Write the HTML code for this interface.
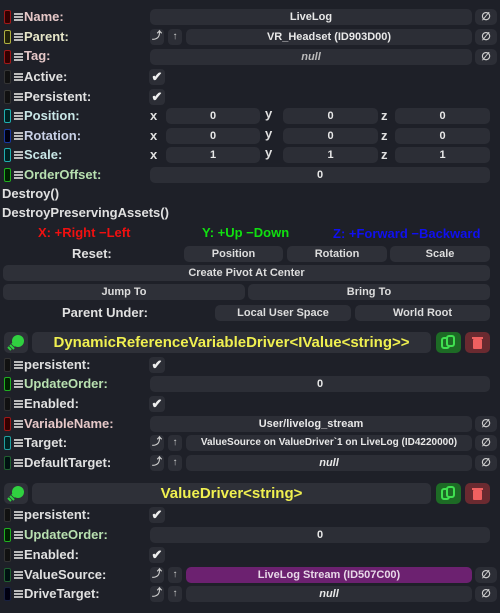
<!DOCTYPE html><html><head><style>
body{margin:0;width:500px;height:613px;background:#1e2028;overflow:hidden;font-family:"Liberation Sans",sans-serif;font-weight:bold;color:#e0e0e0;position:relative}
div{position:absolute;box-sizing:border-box}
.f{background:#2c2e36;border-radius:5px;height:16px;font-size:11px;text-align:center;line-height:16px;color:#e8e8e8}
.lb{font-size:13px;line-height:16px}
.ic{width:7px;height:14px;border:1.5px solid;border-radius:2px;background:#111}
.hb{width:9px;height:8px;border-top:2px solid #bbb;border-bottom:2px solid #bbb;margin-top:4px}
.hb:after{content:"";position:absolute;left:0;top:1px;width:9px;height:2px;background:#bbb}
.n{width:22px;height:16px;background:#2c2e36;border-radius:5px;font-size:11px;line-height:16px;text-align:center;color:#ccc}
.b{width:14px;height:16px;background:#2c2e36;border-radius:4px;font-size:10px;line-height:16px;text-align:center;color:#ccc}
.ck{width:16px;height:16px;background:#2c2e36;border-radius:4px;color:#eee;font-size:13px;line-height:16px;text-align:center}
.bt{background:#2e3038;border-radius:5px;height:16px;font-size:11px;line-height:16px;text-align:center;color:#ddd}
.ax{font-size:13px;line-height:16px}
</style></head><body>

<div class="ic" style="left:4px;top:10px;border-color:#a01818;background:#300"></div><div class="hb" style="left:14px;top:9px"></div><div class="lb" style="left:24px;top:9px;color:#e6c8c8">Name:</div>
<div class="f" style="left:150px;top:9px;width:322px">LiveLog</div><div class="n" style="left:475px;top:9px">∅</div>

<div class="ic" style="left:4px;top:30px;border-color:#b0b040;background:#222208"></div><div class="hb" style="left:14px;top:29px"></div><div class="lb" style="left:24px;top:29px;color:#e6e6c8">Parent:</div>
<div class="b" style="left:150px;top:29px">⤴</div><div class="b" style="left:168px;top:29px">↑</div><div class="f" style="left:186px;top:29px;width:286px">VR_Headset (ID903D00)</div><div class="n" style="left:475px;top:29px">∅</div>

<div class="ic" style="left:4px;top:50px;border-color:#a01818;background:#300"></div><div class="hb" style="left:14px;top:49px"></div><div class="lb" style="left:24px;top:48px;color:#e6c8c8">Tag:</div>
<div class="f" style="left:150px;top:49px;width:322px;font-style:italic;color:#bbb">null</div><div class="n" style="left:475px;top:49px">∅</div>

<div class="ic" style="left:4px;top:70px;border-color:#333"></div><div class="hb" style="left:14px;top:69px"></div><div class="lb" style="left:24px;top:69px">Active:</div><div class="ck" style="left:149px;top:69px">✔</div>
<div class="ic" style="left:4px;top:90px;border-color:#333"></div><div class="hb" style="left:14px;top:89px"></div><div class="lb" style="left:24px;top:89px">Persistent:</div><div class="ck" style="left:149px;top:89px">✔</div>

<div class="ic" style="left:4px;top:109px;border-color:#20b0b0;background:#022"></div><div class="hb" style="left:14px;top:108px"></div><div class="lb" style="left:24px;top:108px;color:#c8e6e6">Position:</div>
<div class="ax" style="left:150px;top:108px">x</div><div class="f" style="left:166px;top:108px;width:94px">0</div><div class="ax" style="left:265px;top:106px">y</div><div class="f" style="left:283px;top:108px;width:95px">0</div><div class="ax" style="left:381px;top:108px">z</div><div class="f" style="left:395px;top:108px;width:95px">0</div>

<div class="ic" style="left:4px;top:129px;border-color:#1838a0;background:#001"></div><div class="hb" style="left:14px;top:128px"></div><div class="lb" style="left:24px;top:128px;color:#c8d0e6">Rotation:</div>
<div class="ax" style="left:150px;top:128px">x</div><div class="f" style="left:166px;top:128px;width:94px">0</div><div class="ax" style="left:265px;top:126px">y</div><div class="f" style="left:283px;top:128px;width:95px">0</div><div class="ax" style="left:381px;top:128px">z</div><div class="f" style="left:395px;top:128px;width:95px">0</div>

<div class="ic" style="left:4px;top:148px;border-color:#20b0b0;background:#022"></div><div class="hb" style="left:14px;top:147px"></div><div class="lb" style="left:24px;top:147px;color:#c8e6e6">Scale:</div>
<div class="ax" style="left:150px;top:147px">x</div><div class="f" style="left:166px;top:147px;width:94px">1</div><div class="ax" style="left:265px;top:145px">y</div><div class="f" style="left:283px;top:147px;width:95px">1</div><div class="ax" style="left:381px;top:147px">z</div><div class="f" style="left:395px;top:147px;width:95px">1</div>

<div class="ic" style="left:4px;top:168px;border-color:#20b020;background:#020"></div><div class="hb" style="left:14px;top:167px"></div><div class="lb" style="left:24px;top:167px;color:#b8e0b0">OrderOffset:</div>
<div class="f" style="left:150px;top:167px;width:340px">0</div>

<div class="lb" style="left:2px;top:186px">Destroy()</div>
<div class="lb" style="left:2px;top:205px">DestroyPreservingAssets()</div>
<div class="lb" style="left:38px;top:225px;color:#f01010">X: +Right −Left</div>
<div class="lb" style="left:202px;top:225px;color:#10e010">Y: +Up −Down</div>
<div class="lb" style="left:333px;top:226px;color:#1010f0">Z: +Forward −Backward</div>

<div class="lb" style="left:72px;top:246px">Reset:</div>
<div class="bt" style="left:184px;top:246px;width:99px">Position</div><div class="bt" style="left:287px;top:246px;width:100px">Rotation</div><div class="bt" style="left:390px;top:246px;width:100px">Scale</div>
<div class="bt" style="left:3px;top:265px;width:487px">Create Pivot At Center</div>
<div class="bt" style="left:3px;top:284px;width:242px">Jump To</div><div class="bt" style="left:248px;top:284px;width:242px">Bring To</div>
<div class="lb" style="left:62px;top:305px">Parent Under:</div>
<div class="bt" style="left:215px;top:305px;width:136px">Local User Space</div><div class="bt" style="left:355px;top:305px;width:135px">World Root</div>

<div style="left:4px;top:332px;width:24px;height:21px;background:#2e3038;border-radius:5px"><svg width="24" height="21"><circle cx="14" cy="9" r="6" fill="#30d040"/><path d="M6 13l4 4M4 15l3 3M8 11l3 3" stroke="#30d040" stroke-width="2"/></svg></div>
<div style="left:32px;top:332px;width:399px;height:21px;background:#2e3038;border-radius:5px;color:#f0f050;font-size:15px;line-height:21px;text-align:center">DynamicReferenceVariableDriver&lt;IValue&lt;string&gt;&gt;</div>
<div style="left:436px;top:332px;width:25px;height:21px;background:#1d6a25;border-radius:5px"><svg width="25" height="21"><rect x="6" y="6" width="7" height="10" rx="2" fill="none" stroke="#40e050" stroke-width="2"/><rect x="11" y="4" width="7" height="10" rx="2" fill="#1d6a25" stroke="#40e050" stroke-width="2"/></svg></div>
<div style="left:465px;top:332px;width:25px;height:21px;background:#6a2a30;border-radius:5px"><svg width="25" height="21"><rect x="8" y="7" width="9" height="10" rx="1" fill="#f06060"/><rect x="7" y="5" width="11" height="2" fill="#f06060"/></svg></div>

<div class="ic" style="left:4px;top:358px;border-color:#333"></div><div class="hb" style="left:14px;top:357px"></div><div class="lb" style="left:24px;top:357px">persistent:</div><div class="ck" style="left:149px;top:357px">✔</div>
<div class="ic" style="left:4px;top:377px;border-color:#20b020;background:#020"></div><div class="hb" style="left:14px;top:376px"></div><div class="lb" style="left:24px;top:376px;color:#b8e0b0">UpdateOrder:</div><div class="f" style="left:150px;top:376px;width:340px">0</div>
<div class="ic" style="left:4px;top:397px;border-color:#333"></div><div class="hb" style="left:14px;top:396px"></div><div class="lb" style="left:24px;top:396px">Enabled:</div><div class="ck" style="left:149px;top:396px">✔</div>
<div class="ic" style="left:4px;top:417px;border-color:#a01818;background:#300"></div><div class="hb" style="left:14px;top:416px"></div><div class="lb" style="left:24px;top:416px;color:#e6c8c8">VariableName:</div><div class="f" style="left:150px;top:416px;width:322px">User/livelog_stream</div><div class="n" style="left:475px;top:416px">∅</div>
<div class="ic" style="left:4px;top:436px;border-color:#20a0a0;background:#022"></div><div class="hb" style="left:14px;top:435px"></div><div class="lb" style="left:24px;top:435px">Target:</div><div class="b" style="left:150px;top:435px">⤴</div><div class="b" style="left:168px;top:435px">↑</div><div class="f" style="left:186px;top:435px;width:286px;font-size:10px">ValueSource on ValueDriver`1 on LiveLog (ID4220000)</div><div class="n" style="left:475px;top:435px">∅</div>
<div class="ic" style="left:4px;top:456px;border-color:#206030;background:#011"></div><div class="hb" style="left:14px;top:455px"></div><div class="lb" style="left:24px;top:455px">DefaultTarget:</div><div class="b" style="left:150px;top:455px">⤴</div><div class="b" style="left:168px;top:455px">↑</div><div class="f" style="left:186px;top:455px;width:286px;font-style:italic">null</div><div class="n" style="left:475px;top:455px">∅</div>

<div style="left:4px;top:483px;width:24px;height:21px;background:#2e3038;border-radius:5px"><svg width="24" height="21"><circle cx="14" cy="9" r="6" fill="#30d040"/><path d="M6 13l4 4M4 15l3 3M8 11l3 3" stroke="#30d040" stroke-width="2"/></svg></div>
<div style="left:32px;top:483px;width:399px;height:21px;background:#2e3038;border-radius:5px;color:#f0f050;font-size:15px;line-height:21px;text-align:center">ValueDriver&lt;string&gt;</div>
<div style="left:436px;top:483px;width:25px;height:21px;background:#1d6a25;border-radius:5px"><svg width="25" height="21"><rect x="6" y="6" width="7" height="10" rx="2" fill="none" stroke="#40e050" stroke-width="2"/><rect x="11" y="4" width="7" height="10" rx="2" fill="#1d6a25" stroke="#40e050" stroke-width="2"/></svg></div>
<div style="left:465px;top:483px;width:25px;height:21px;background:#6a2a30;border-radius:5px"><svg width="25" height="21"><rect x="8" y="7" width="9" height="10" rx="1" fill="#f06060"/><rect x="7" y="5" width="11" height="2" fill="#f06060"/></svg></div>

<div class="ic" style="left:4px;top:508px;border-color:#333"></div><div class="hb" style="left:14px;top:507px"></div><div class="lb" style="left:24px;top:507px">persistent:</div><div class="ck" style="left:149px;top:507px">✔</div>
<div class="ic" style="left:4px;top:528px;border-color:#20b020;background:#020"></div><div class="hb" style="left:14px;top:527px"></div><div class="lb" style="left:24px;top:527px;color:#b8e0b0">UpdateOrder:</div><div class="f" style="left:150px;top:527px;width:340px">0</div>
<div class="ic" style="left:4px;top:548px;border-color:#333"></div><div class="hb" style="left:14px;top:547px"></div><div class="lb" style="left:24px;top:547px">Enabled:</div><div class="ck" style="left:149px;top:547px">✔</div>
<div class="ic" style="left:4px;top:568px;border-color:#206030;background:#011"></div><div class="hb" style="left:14px;top:567px"></div><div class="lb" style="left:24px;top:567px">ValueSource:</div><div class="b" style="left:150px;top:567px">⤴</div><div class="b" style="left:168px;top:567px">↑</div><div class="f" style="left:186px;top:567px;width:286px;background:#6c2170;color:#e8d8e8">LiveLog Stream  (ID507C00)</div><div class="n" style="left:475px;top:567px">∅</div>
<div class="ic" style="left:4px;top:587px;border-color:#182040;background:#001"></div><div class="hb" style="left:14px;top:586px"></div><div class="lb" style="left:24px;top:586px">DriveTarget:</div><div class="b" style="left:150px;top:586px">⤴</div><div class="b" style="left:168px;top:586px">↑</div><div class="f" style="left:186px;top:586px;width:286px;font-style:italic">null</div><div class="n" style="left:475px;top:586px">∅</div>
</body></html>
